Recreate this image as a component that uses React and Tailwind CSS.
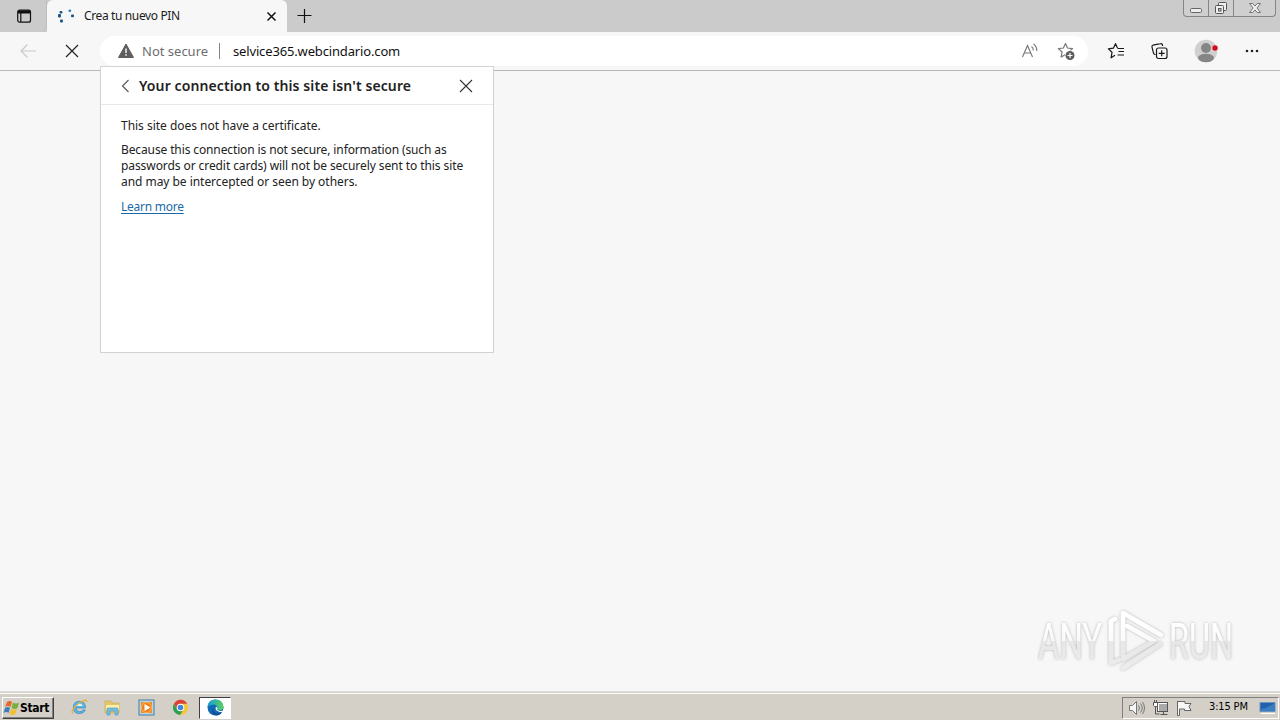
import React from "react";

const ui = "font-['Noto_Sans','Open_Sans',sans-serif]";
const tahoma = "font-['DejaVu_Sans_Condensed','DejaVu_Sans',sans-serif]";

function TabStrip() {
  return (
    <header className="flex h-8 shrink-0 bg-[#cbcbcb]">
      <div className="flex w-[47px] items-center justify-center rounded-br-md border-r border-[#bcbcbc] pl-0.5">
        <svg width="16" height="16" viewBox="0 0 16 16" fill="none" stroke="#111" strokeWidth="1.2">
          <rect x="1.7" y="2.2" width="12.800" height="12" rx="2" />
          <path d="M2 2.500h12.300v3H2z" fill="#111" stroke="none" />
          <path d="M4.8 5v9" />
        </svg>
      </div>
      <div className="flex w-[240px] items-center rounded-t-md bg-[#f7f7f7] pl-2.5 pr-[9px]">
        <svg width="18" height="16" viewBox="0 0 18 16" fill="#1d5586">
          <rect x="2.500" y="3" width="3" height="2.5" rx="1" />
          <rect x="1" y="6" width="3" height="3.5" rx="1" />
          <rect x="3" y="11.500" width="3" height="3" rx="1" />
          <rect x="11.500" y="1.500" width="2.700" height="2.500" rx="1" fill="#3b81b8" />
          <rect x="14" y="6.500" width="3" height="2.700" rx="1" />
        </svg>
        <span className="ml-[9px] whitespace-nowrap text-[12px] leading-4 tracking-[-0.37px] text-[#1b1b1b]">Crea tu nuevo PIN</span>
        <svg className="ml-auto" width="13" height="13" viewBox="0 0 13 13" stroke="#111" strokeWidth="1.500">
          <path d="M2.500 2.500l8 8M10.500 2.500l-8 8" />
        </svg>
      </div>
      <svg className="ml-[10px] mt-2" width="16" height="16" viewBox="0 0 16 16" stroke="#111" strokeWidth="1.200">
        <path d="M7.500 1v14M.500 7.500h14" />
      </svg>
      <div className="ml-auto mr-1 flex h-[17px] w-[93px] rounded-b border border-t-0 border-[#858585] bg-[#cfcfcf]">
        <div className="flex w-[25px] justify-center border-r border-[#858585]">
          <svg width="14" height="16" viewBox="0 0 14 16"><rect x="1.500" y="8.500" width="11" height="4" rx="1.200" fill="#eee" stroke="#666" /></svg>
        </div>
        <div className="flex w-[25px] justify-center border-r border-[#858585]">
          <svg width="14" height="16" viewBox="0 0 14 16" fill="#eee" stroke="#555">
            <rect x="4.500" y="2.500" width="8" height="8" rx="1" />
            <rect x="1.500" y="5.500" width="8" height="8" rx="1" />
            <rect x="4.500" y="8.500" width="2.500" height="2.500" fill="#ccc" />
          </svg>
        </div>
        <div className="flex flex-1 justify-center">
          <svg width="14" height="16" viewBox="0 0 14 16" fill="#eee" stroke="#666" strokeWidth=".900">
            <path d="M1.500 3.500h3.200L7 6l2.300-2.500h3.200L9 8l3.500 4.500H9.300L7 10l-2.300 2.500H1.500L5 8z" />
          </svg>
        </div>
      </div>
    </header>
  );
}

const starPath = "M8.5 1.5l2 4.5 5 .6-3.700 3.400 1 5-4.300-2.400-4.400 2.400 1-5L1.400 6.600l5-.6z";

function Toolbar() {
  return (
    <nav className="flex h-[39px] shrink-0 items-center border-b border-[#b8b8b8] bg-[#f7f7f7]">
      <svg className="ml-[19px]" width="18" height="16" viewBox="0 0 18 16" fill="none" stroke="#c9c9c9" strokeWidth="1.200">
        <path d="M17 8H2M8.500 1.500L2 8l6.500 6.500" />
      </svg>
      <svg className="ml-[27px]" width="16" height="16" viewBox="0 0 16 16" stroke="#222" strokeWidth="1.200">
        <path d="M2 2l12 12M14 2L2 14" />
      </svg>
      <div className="ml-5 flex h-[30px] w-[988px] items-center rounded-full bg-white pl-[17px] pr-3">
        <svg width="18" height="16" viewBox="0 0 18 16">
          <path d="M9 1L16.500 14.500H1.500z" fill="#5e5e5e" stroke="#5e5e5e" strokeLinejoin="round" />
          <path d="M9 5.500v4.500M9 11.300v1.500" stroke="#fff" strokeWidth="1.400" />
        </svg>
        <span className="ml-[7px] w-[66px] whitespace-nowrap text-[13px] leading-4 text-[#6d6d6d]">Not secure</span>
        <span className="ml-[11px] h-4 w-px bg-[#858585]" />
        <span className="ml-[13px] whitespace-nowrap text-[13px] leading-4 tracking-[-0.150px] text-[#111]">selvice365.webcindario.com</span>
        <svg className="ml-auto" width="18" height="18" viewBox="0 0 18 18" fill="none" stroke="#777" strokeWidth="1.100">
          <path d="M1.500 15L6.500 3.500 11.500 15M3.200 11h6.600M10.500 4.500q2 1.500 1.800 4M12.500 2q3.500 2.500 3.300 7" />
        </svg>
        <svg className="ml-[18px]" width="19" height="19" viewBox="0 0 19 19" fill="none" stroke="#777" strokeWidth="1.200">
          <path d={starPath} strokeLinejoin="round" />
          <circle cx="13" cy="13.500" r="5.200" fill="#fff" stroke="none" />
          <circle cx="13" cy="13.500" r="4.500" fill="#5c5c5c" stroke="none" />
          <path d="M13 11v5M10.500 13.500h5" stroke="#fff" />
        </svg>
      </div>
      <svg className="ml-[19px]" width="19" height="18" viewBox="0 0 19 18" fill="none" stroke="#181818" strokeWidth="1.200" strokeLinejoin="round">
        <path d="M10.500 6L8.500 1.700 6.400 6.200l-5 .7L5 10.300l-.9 5.500L8 13.200M10.500 6.500h6.500M11.500 9.500h5.500M10.500 13h6.500" />
      </svg>
      <svg className="ml-6" width="18" height="18" viewBox="0 0 18 18" fill="none" stroke="#181818" strokeWidth="1.200" strokeLinejoin="round">
        <rect x="6.500" y="6" width="10.500" height="10.500" rx="2" />
        <path d="M11.700 8.300v6M8.700 11.300h6M12.500 4V3q-.5-1.700-2-1.300L3 3.200q-1.500.5-1 2l1.500 6q.5 1.300 2 1.300" />
      </svg>
      <svg className="ml-[26px]" width="24" height="24" viewBox="0 0 24 24">
        <circle cx="12" cy="12" r="11.300" fill="#d0d0d0" />
        <circle cx="12" cy="9" r="5" fill="#868686" />
        <ellipse cx="12" cy="19" rx="8" ry="4.200" fill="#868686" />
        <circle cx="21" cy="9" r="3" fill="#f1d6d6" />
        <circle cx="21" cy="9" r="2.700" fill="#d50b20" />
      </svg>
      <svg className="ml-[26px]" width="16" height="16" viewBox="0 0 16 16" fill="#222">
        <circle cx="3" cy="8" r="1.300" /><circle cx="8" cy="8" r="1.300" /><circle cx="13" cy="8" r="1.300" />
      </svg>
    </nav>
  );
}

function SecurityPopup() {
  return (
    <section className="absolute left-[100px] top-[66px] h-[287px] w-[394px] border border-[#d2d2d2] bg-white text-[#222]">
      <div className="flex h-[38px] items-center border-b border-[#e8e8e8] pl-5 pr-[19px]">
        <svg width="9" height="14" viewBox="0 0 9 14" fill="none" stroke="#555" strokeWidth="1.100"><path d="M7.500 1L1.500 7l6 6" /></svg>
        <h1 className="ml-[9px] whitespace-nowrap text-[14px] font-semibold leading-5 tracking-[0.110px]">Your connection to this site isn't secure</h1>
        <svg className="ml-auto" width="16" height="16" viewBox="0 0 16 16" stroke="#333" strokeWidth="1.100"><path d="M2 2l12 12M14 2L2 14" /></svg>
      </div>
      <div className="flex flex-col items-start whitespace-nowrap pl-5 pt-[13px] text-[12px] leading-4">
        <p className="tracking-[-0.020px]">This site does not have a certificate.</p>
        <p className="mt-2 tracking-[-0.080px]"><span className="tracking-[-0.120px]">Because this connection is not secure, information (such as</span><br />passwords or credit cards) will not be securely sent to this site<br /><span className="tracking-[-0.040px]">and may be intercepted or seen by others.</span></p>
        <a className="mt-[9px] tracking-[-0.250px] text-[#1b6aa8] underline underline-offset-2">Learn more</a>
      </div>
    </section>
  );
}

function Watermark() {
  return (
    <div className="absolute left-[1037px] top-[608px] flex h-16 w-[210px] items-center">
      <svg width="210" height="64" viewBox="0 0 210 64" fill="none">
        <defs>
          <linearGradient id="metal" x1="0" y1="0" x2="0" y2="64" gradientUnits="userSpaceOnUse">
            <stop offset=".200" stopColor="#fff" /><stop offset=".510" stopColor="#fafafa" /><stop offset=".520" stopColor="#e7e7e7" /><stop offset="1" stopColor="#ededed" />
          </linearGradient>
          <filter id="soft" x="-10%" y="-10%" width="120%" height="130%">
            <feDropShadow dx="0" dy="0" stdDeviation="1.700" floodColor="#777" floodOpacity=".550" />
          </filter>
        </defs>
        <g filter="url(#soft)">
          <g fill="url(#metal)" fontFamily="Roboto, sans-serif" fontSize="50">
            <text x="1" y="51" textLength="64" lengthAdjust="spacingAndGlyphs">ANY</text>
            <text x="132" y="51" textLength="64" lengthAdjust="spacingAndGlyphs">RUN</text>
          </g>
          <g stroke="url(#metal)" strokeWidth="4.500" strokeLinejoin="round" strokeLinecap="round">
            <path d="M78 11l-4 2v42l8-3" />
            <path d="M124 27L86 5v46l31-18L90 18" />
            <path d="M123 36L86 60" />
          </g>
        </g>
      </svg>
    </div>
  );
}

function Taskbar() {
  return (
    <footer className="flex h-[28px] shrink-0 flex-col border-t border-[#d4d0c8] bg-[#d4d0c8]">
      <div className="h-px shrink-0 bg-white" />
      <div className="flex flex-1 items-center">
        <button className={"ml-0.5 mt-px flex h-[22px] w-[52px] items-center border border-b-[#404040] border-l-white border-r-[#404040] border-t-white pl-px text-[12px] font-bold shadow-[inset_-1px_-1px_#808080] " + tahoma}>
          <svg width="17" height="16" viewBox="0 0 17 16" className="-ml-px shrink-0">
            <path d="M4 2q3-2 5 0L7.500 7q-3-2-5.500 0z" fill="#e5672c" />
            <path d="M10 2.500q3 2 6 0L14.500 8q-3 2-6 0z" fill="#79ae3c" />
            <path d="M2 8q3-2 5 0l-1.500 5q-2-2-5 0z" fill="#397ec1" />
            <path d="M8 8.800q3 2 6 0L12.500 14q-3 2-6 0z" fill="#f4bd36" />
          </svg>
          <span className="tracking-[-0.350px]">Start</span>
        </button>
        <svg className="ml-[17px]" width="17" height="18" viewBox="0 0 18 18" fill="none">
          <path d="M14.500 10H5.200q.2 4 4 4 2.500 0 3.500-1.800h2.500Q13.500 16 9 16q-6.500 0-6.500-6.500T9 3q6.500 0 6.300 7z" fill="#5bb8e8" stroke="#2c82bb" strokeWidth=".700" />
          <path d="M5.500 8h6.800q-.5-2.700-3.300-2.700T5.500 8z" fill="#eee" />
          <path d="M2 16Q-.5 14 4 9t10-7q3-1 2.700 2" stroke="#e9ae32" strokeWidth="1.300" />
        </svg>
        <svg className="ml-[16px]" width="17" height="17" viewBox="0 0 17 17">
          <path d="M1 2h6l1 2h7v10H1z" fill="#e6c66d" stroke="#c8a74e" strokeWidth=".600" />
          <path d="M2 6h13v5H2z" fill="#fff0a9" />
          <path d="M3 16v-6q0-1 1-1h9q1 0 1 1v6h-3v-4H6v4z" fill="#75bddf" stroke="#4795ba" strokeWidth=".600" />
        </svg>
        <svg className="ml-[17px]" width="17" height="17" viewBox="0 0 17 17">
          <rect x="1" y="1" width="15" height="15" fill="#b5d5e8" stroke="#477da5" />
          <rect x="3" y="3" width="11" height="11" fill="#ee8e21" />
          <circle cx="8.500" cy="8.500" r="5" fill="#f47c12" stroke="#ffb65c" />
          <path d="M6.500 5l6 3.500-6 3.500z" fill="#fff" />
        </svg>
        <svg className="ml-[17px]" width="17" height="17" viewBox="0 0 17 17">
          <circle cx="8.500" cy="8.500" r="7.500" fill="#f8c72d" />
          <path d="M2 4.700a7.500 7.500 0 0 1 13.200 0H8.500L5.300 10.300z" fill="#dc4237" />
          <path d="M2 4.700A7.500 7.500 0 0 0 8 16l3.500-5.500H5.300z" fill="#2d9e55" />
          <circle cx="8.500" cy="8.500" r="3.800" fill="#fff" /><circle cx="8.500" cy="8.500" r="2.800" fill="#4285dd" />
        </svg>
        <div className="ml-[10px] mt-px flex h-[22px] w-[32px] items-center justify-center border border-b-white border-l-[#404040] border-r-white border-t-[#404040] bg-white">
          <svg width="17" height="17" viewBox="0 0 17 17">
            <defs><linearGradient id="edge"><stop stopColor="#199bd9" /><stop offset="1" stopColor="#5bd25b" /></linearGradient></defs>
            <circle cx="8.500" cy="8.500" r="8" fill="#1269b5" />
            <path d="M.5 8Q1 .5 8.500.5q7 0 8 7 0 4-4.500 4-3.500 0-2-2 1-3-2.500-4Q3 5 .5 8z" fill="url(#edge)" />
            <path d="M7 7q-3 5 2 7 3 1 6-1l-2 2.500q-2 1-4 1Q2 14 7 7z" fill="#174c92" />
            <path d="M9 7.500q-1.500 4 2.500 5 2.500 1 4.500 0l1 2V11q-2 1.500-5 .8-3-.8-1.500-2.500z" fill="#fff" />
          </svg>
        </div>
        <div className="ml-auto mr-px mt-px flex h-[22px] w-[157px] items-center border border-b-white border-l-[#808080] border-r-white border-t-[#808080] pl-[5px] pr-0.5">
          <svg width="18" height="16" viewBox="0 0 18 16" fill="none" stroke="#777">
            <path d="M1.500 5.500h3l4-4v13l-4-4h-3z" fill="#f5f5f5" />
            <path d="M10.500 5.500q2 2.500 0 5M12.500 3.500q3.500 4.500 0 9M14.500 2q4 6 0 12" />
          </svg>
          <svg className="ml-[6px]" width="18" height="16" viewBox="0 0 18 16" stroke="#555" fill="none">
            <rect x="6.500" y="3.500" width="9" height="8" fill="#aaa" stroke="#fff" /><rect x="5.500" y="2.500" width="10" height="9" />
            <path d="M8.500 14.500h7M11.500 12v2M3.500 7v7h4" />
            <path d="M1.500 2.500h4v3l-1 1h-2l-1-1zM2.500 0v2M4.500 0v2" fill="#fff" />
          </svg>
          <svg className="ml-[6px]" width="17" height="16" viewBox="0 0 17 16" fill="#f7f7f7" stroke="#666">
            <path d="M1.500 1v14.500h2V9h5v1.500h6.500L13 6.500l2-3H9v-2H1.500z" />
          </svg>
          <span className={"ml-4 whitespace-nowrap text-[11px] tracking-[-0.150px] text-black " + tahoma}>3:15 PM</span>
          <svg className="ml-auto" width="17" height="16" viewBox="0 0 17 16">
            <path d="M1 2.500h15v9H1z" fill="#2160ad" stroke="#6a91bd" />
            <path d="M2 9Q9 8 15.500 3v8H2z" fill="#397dc2" /><path d="M2 13.500h14" stroke="#fff" />
          </svg>
        </div>
      </div>
    </footer>
  );
}

export default function App() {
  return (
    <div className={"relative flex h-[720px] w-[1280px] flex-col overflow-hidden bg-[#f7f7f7] " + ui}>
      <TabStrip />
      <Toolbar />
      <main className="flex-1 border-b border-[#dedede] bg-[#f7f7f7]" />
      <Taskbar />
      <SecurityPopup />
      <Watermark />
    </div>
  );
}
